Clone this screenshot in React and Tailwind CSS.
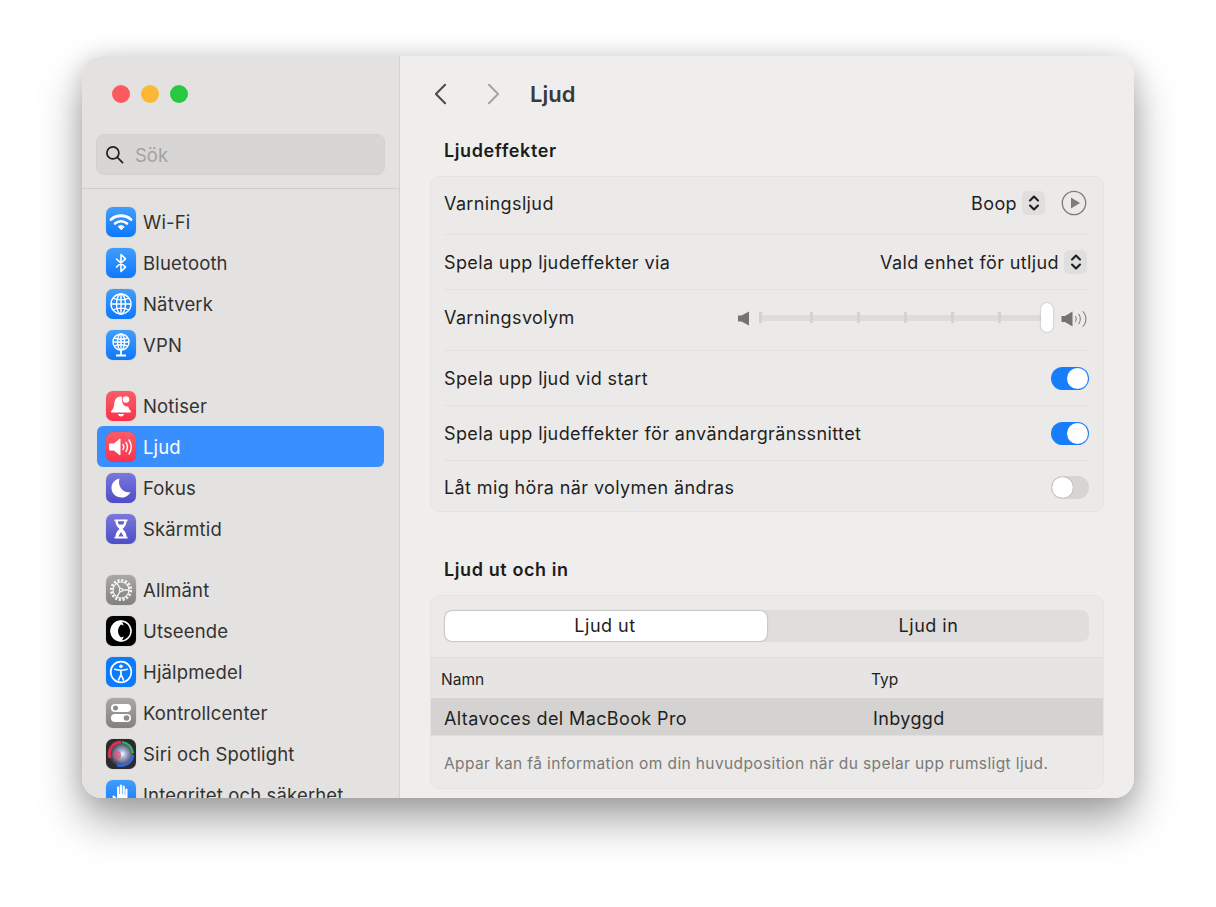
import React from "react";

const blue = "bg-linear-to-b from-[#3f9dfb] to-[#0a78fe]";
const gray = "bg-linear-to-b from-[#a9a8a7] to-[#828180]";
const indigo = "bg-linear-to-b from-[#7a78dc] to-[#4f4cc8]";
const red = "bg-linear-to-b from-[#fb5b68] to-[#f9304c]";

function Wifi() {
  return (
    <svg viewBox="0 0 30 30" className="w-full h-full" fill="none" stroke="#fff" strokeLinecap="round">
      <path d="M5 12.5C10.5 7.5 19.5 7.5 25 12.5" strokeWidth="2.8" />
      <path d="M9 16.5C12.5 13.5 17.5 13.5 21 16.5" strokeWidth="2.6" />
      <path d="M15 22.5l-2.8-3c1.6-1.2 4-1.2 5.6 0z" fill="#fff" stroke="#fff" strokeWidth="1" strokeLinejoin="round" />
    </svg>
  );
}

function Bluetooth() {
  return (
    <svg viewBox="0 0 30 30" className="w-full h-full" fill="none" stroke="#fff" strokeWidth="1.6" strokeLinejoin="round" strokeLinecap="round">
      <path d="M10.500 11l9 8.200-4.500 4.300V6.500l4.500 4.300-9 8.200" />
    </svg>
  );
}

function Globe({ small }) {
  return (
    <svg viewBox="0 0 30 30" className="w-full h-full" fill="none" stroke="#fff" strokeWidth="1.4">
      {small ? (
        <g>
          <circle cx="15" cy="12" r="8" />
          <ellipse cx="15" cy="12" rx="3.5" ry="8" />
          <path d="M8.500 8c4 1.500 9 1.500 13 0M8.500 16c4-1.500 9-1.500 13 0M7 12h16M15 4v16" />
          <path d="M15 20v5M10 25.500h10" strokeWidth="1.800" />
        </g>
      ) : (
        <g>
          <circle cx="15" cy="15" r="10" />
          <ellipse cx="15" cy="15" rx="4.5" ry="10" />
          <path d="M7 9c4.500 2.500 11.500 2.500 16 0M7 21c4.500-2.500 11.500-2.500 16 0M5 15h20M15 5v20" />
        </g>
      )}
    </svg>
  );
}

function Bell() {
  return (
    <svg viewBox="0 0 30 30" className="w-full h-full" fill="#fff">
      <path d="M15 5.500c-4.500 0-6.500 3.500-6.800 7.500-.2 3-1 5-3 7-.5.6-.2 1.500.6 1.500h18.400c.8 0 1.100-.9.6-1.500-1.400-1.500-2.200-2.800-2.600-4.500-4 .5-7-3-6.200-9.800-.3-.1-.6-.2-1-.2z" />
      <path d="M12 23h6c-.3 1.600-1.500 2.500-3 2.500s-2.700-.9-3-2.500z" />
      <circle cx="20" cy="8.500" r="3.300" />
    </svg>
  );
}

function Speaker({ fill = "#fff" }) {
  return (
    <svg viewBox="0 0 30 30" className="w-full h-full" fill="none" stroke={fill} strokeLinecap="round">
      <path d="M4 12h4l6-5v16l-6-5H4z" fill={fill} strokeWidth="1" strokeLinejoin="round" />
      <path d="M17 12.500c1 1.500 1 3.500 0 5M20 10.500c1.800 2.800 1.800 6.200 0 9M23 8c2.800 4.300 2.800 9.700 0 14" strokeWidth="1.4" />
    </svg>
  );
}

function Moon() {
  return (
    <svg viewBox="0 0 30 30" className="w-full h-full" fill="#fff">
      <path d="M13.500 5.500C8.500 6.500 5.500 10.500 5.500 15c0 5.500 4.500 9.500 10 9.500 4 0 7.500-2 9-5.500-6.500 1.500-13.500-5-11-13.500z" />
    </svg>
  );
}

function Hourglass() {
  return (
    <svg viewBox="0 0 30 30" className="w-full h-full" fill="#fff">
      <path d="M8.500 5.500h13v1.800h-1c0 3.700-1.800 5.700-4 7.700 2.200 2 4 4 4 7.700h1v1.800h-13v-1.800h1c0-3.700 1.800-5.700 4-7.700-2.200-2-4-4-4-7.700h-1z" />
      <path d="M11.800 7.300h6.400c-.1 1.200-.4 2.200-1 3.200h-4.400c-.6-1-.9-2-1-3.200zM15 18l-2.800 4.500h5.600z" fill="#6361d2" />
    </svg>
  );
}

function Gear() {
  return (
    <svg viewBox="0 0 30 30" className="w-full h-full" fill="none" stroke="#f4f4f3">
      <circle cx="15" cy="15" r="9.700" strokeWidth="2.800" strokeDasharray="2.200 1.600" />
      <circle cx="15" cy="15" r="8" strokeWidth="1.200" />
      <circle cx="15" cy="15" r="1.600" strokeWidth="1.200" />
      <path d="M16.500 15h6.500M14.200 13.600l-3.500-5.800M14.200 16.400l-3.500 5.800" strokeWidth="1.300" />
    </svg>
  );
}

function Appearance() {
  return (
    <svg viewBox="0 0 30 30" className="w-full h-full">
      <circle cx="15" cy="15" r="10.500" fill="#fff" />
      <path d="M15 8.500c-2 2-3 4-3 6.500s1 4.500 3 6.500c4-1 6.500-3.500 6.500-6.500S19 9.500 15 8.500z" fill="#000" />
      <path d="M15 4.500a10.500 10.500 0 0 1 0 21c2.500-3 3.500-6.500 3.500-10.500S17.500 7.500 15 4.500z" fill="#000" />
      <circle cx="15" cy="15" r="10" fill="none" stroke="#fff" strokeWidth="1.500" />
    </svg>
  );
}

function Accessibility() {
  return (
    <svg viewBox="0 0 30 30" className="w-full h-full" fill="none" stroke="#fff">
      <circle cx="15" cy="15" r="10.300" strokeWidth="1.700" />
      <circle cx="15" cy="9.300" r="1.800" fill="#fff" stroke="none" />
      <path d="M8.800 12.300c4 1.200 8.400 1.200 12.400 0M15 13.500v4M15 17.500l-2.500 5.500M15 17.500l2.500 5.500" strokeWidth="1.700" strokeLinecap="round" />
    </svg>
  );
}

function Controls() {
  return (
    <svg viewBox="0 0 30 30" className="w-full h-full">
      <rect x="5" y="6" width="20" height="8" rx="4" fill="#fff" />
      <circle cx="9.500" cy="10" r="2.500" fill="#8e8d8c" />
      <rect x="5" y="16" width="20" height="8" rx="4" fill="#fff" />
      <circle cx="20.500" cy="20" r="2.800" fill="#8e8d8c" />
    </svg>
  );
}

function Siri() {
  return (
    <svg viewBox="0 0 30 30" className="w-full h-full">
      <defs>
        <radialGradient id="siri-core" cx="0.55" cy="0.5" r="0.5">
          <stop offset="0" stopColor="#fff" />
          <stop offset="0.3" stopColor="#aab6d8" />
          <stop offset="1" stopColor="#3a3a48" />
        </radialGradient>
      </defs>
      <circle cx="15" cy="15" r="12" fill="url(#siri-core)" />
      <path d="M15 3a12 12 0 0 0-11 16" fill="none" stroke="#f0304f" strokeWidth="3" opacity="0.9" />
      <path d="M16 3a12 12 0 0 1 11 11" fill="none" stroke="#2fc46b" strokeWidth="2" opacity="0.9" />
      <path d="M27 16a12 12 0 0 1-16 10" fill="none" stroke="#2f6cf0" strokeWidth="2.500" opacity="0.9" />
      <circle cx="11" cy="16" r="4" fill="#e0507a" opacity="0.7" />
    </svg>
  );
}

function Hand() {
  return (
    <svg viewBox="0 0 30 30" className="w-full h-full" fill="#fff">
      <path d="M11 7.500a1.100 1.100 0 0 1 2.200 0V14h.6V5.700a1.100 1.100 0 0 1 2.200 0V14h.6V6.700a1.100 1.100 0 0 1 2.200 0V15h.5V9.500a1.100 1.100 0 0 1 2.200 0V19c0 4-2.500 7-6.500 7-3 0-4.500-1.500-5.500-3.500l-3-5.500c-.6-1.200 1-2.200 1.900-1.200L11 18.500z" />
    </svg>
  );
}

function Chevrons() {
  return (
    <svg viewBox="0 0 12 18" className="w-[12px] h-[18px]" fill="none" stroke="#1d1d1f" strokeWidth="2.100" strokeLinecap="round" strokeLinejoin="round">
      <path d="M2 6.500L6 2.500l4 4M2 11.500L6 15.500l4-4" />
    </svg>
  );
}

function Stepper() {
  return (
    <div className="w-[23px] h-[24px] rounded-[5px] bg-[#e0dfdd] flex items-center justify-center">
      <Chevrons />
    </div>
  );
}

function Toggle({ on }) {
  return on ? (
    <div className="w-[38px] h-[23px] rounded-full bg-[#167efb] flex items-center justify-end pr-[1px]">
      <div className="w-[21px] h-[21px] rounded-full bg-white" />
    </div>
  ) : (
    <div className="w-[38px] h-[23px] rounded-full bg-[#d6d5d3] flex items-center pl-[1px]">
      <div className="w-[21px] h-[21px] rounded-full bg-white shadow-[0_0_1px_rgba(0,0,0,0.5)]" />
    </div>
  );
}

function Tick({ className }) {
  return <div className={"w-[3px] h-[11px] shrink-0 bg-[#d3d2d0] " + className} />;
}

function Slider() {
  return (
    <div className="flex items-center mr-[2px]">
      <svg viewBox="0 0 13 15" className="w-[13px] h-[17px] mr-[9px] mt-[2px]" fill="#737372">
        <path d="M1 4.500h3.500L12 .5v14l-7.500-4H1z" />
      </svg>
      <div className="flex items-center h-[6px] w-[282px] bg-[#dddcda]">
        <Tick className="mr-[48px]" />
        <Tick className="mr-[44px]" />
        <Tick className="mr-[44px]" />
        <Tick className="mr-[44px]" />
        <Tick className="mr-[44px]" />
        <Tick />
      </div>
      <div className="w-[12px] h-[29px] rounded-full bg-white shadow-[0_0_2px_rgba(0,0,0,0.3)]" />
      <svg viewBox="0 0 26 18" className="w-[26px] h-[18px] ml-[8px] mt-[2px]" fill="none" stroke="#737372" strokeLinecap="round">
        <path d="M0.500 6h3.500L11.500 1.500v15L4 12H0.500z" fill="#737372" stroke="none" />
        <path d="M14.500 6.500c1 1.500 1 3.500 0 5M17.800 4.200c2 3 2 6.600 0 9.600M22 1.500c4 4.500 4 10.500 0 15" strokeWidth="1" />
      </svg>
    </div>
  );
}

function Row({ children, className = "" }) {
  return (
    <div className={"flex items-center justify-between border-[#e2e1df] text-[18px] tracking-[0.38px] text-[#1f1f1f] " + className}>
      {children}
    </div>
  );
}

function NavItem({ label, bg, icon, active }) {
  return (
    <div className={"flex items-center h-[41px] shrink-0 rounded-[6px] pl-[9px] pt-[1px] " + (active ? "bg-[#3a8ffe] text-white" : "text-[#333333]")}>
      <div className={"w-[30px] h-[30px] shrink-0 rounded-[7px] overflow-hidden shadow-[0_0_1px_rgba(0,0,0,0.35)] " + bg}>{icon}</div>
      <span className="ml-[7px] pt-[2px] text-[18.500px] tracking-[0.15px] whitespace-nowrap">{label}</span>
    </div>
  );
}

export default function App() {
  return (
    <div className="min-h-[907px] bg-white pl-[82px] pt-[56px] font-['Inter',sans-serif] antialiased">
      <div className="flex w-[1052px] h-[742px] rounded-[20px] overflow-hidden shadow-[0_22px_44px_rgba(0,0,0,0.36),0_0_22px_rgba(0,0,0,0.12)]">
        <aside className="w-[318px] shrink-0 bg-[#e3e2e0] border-r border-[#d2d1cf] flex flex-col">
          <div className="flex shrink-0 gap-[11px] pl-[30px] pt-[29px]">
            <div className="w-[18px] h-[18px] rounded-full bg-[#fd5a60]" />
            <div className="w-[18px] h-[18px] rounded-full bg-[#fdb833]" />
            <div className="w-[18px] h-[18px] rounded-full bg-[#2ac840]" />
          </div>
          <div className="mx-[14px] mt-[31px] h-[41px] shrink-0 rounded-[8px] bg-[#d7d6d4] border border-[#d2d1cf] flex items-center pl-[8px]">
            <svg viewBox="0 0 20 20" className="w-[19px] h-[19px]" fill="none" stroke="#1f1f1f" strokeWidth="1.800" strokeLinecap="round">
              <circle cx="8.300" cy="8.300" r="6.300" />
              <path d="M13 13l5.500 5.500" />
            </svg>
            <span className="ml-[11px] pt-[2px] text-[18.500px] text-[#a3a2a0]">Sök</span>
          </div>
          <div className="mt-[13px] shrink-0 border-t border-[#cfcecc]" />
          <nav className="flex flex-col shrink-0 px-[15px] pt-[12px]">
            <NavItem label="Wi-Fi" bg={blue} icon={<Wifi />} />
            <NavItem label="Bluetooth" bg={blue} icon={<Bluetooth />} />
            <NavItem label="Nätverk" bg={blue} icon={<Globe />} />
            <NavItem label="VPN" bg={blue} icon={<Globe small />} />
            <div className="h-[20px] shrink-0" />
            <NavItem label="Notiser" bg={red} icon={<Bell />} />
            <NavItem label="Ljud" bg={red} icon={<Speaker />} active />
            <NavItem label="Fokus" bg={indigo} icon={<Moon />} />
            <NavItem label="Skärmtid" bg={indigo} icon={<Hourglass />} />
            <div className="h-[20px] shrink-0" />
            <NavItem label="Allmänt" bg={gray} icon={<Gear />} />
            <NavItem label="Utseende" bg="bg-black" icon={<Appearance />} />
            <NavItem label="Hjälpmedel" bg="bg-[#0a7bfd]" icon={<Accessibility />} />
            <NavItem label="Kontrollcenter" bg={gray} icon={<Controls />} />
            <NavItem label="Siri och Spotlight" bg="bg-[#2b2b2e]" icon={<Siri />} />
            <NavItem label="Integritet och säkerhet" bg={blue} icon={<Hand />} />
          </nav>
        </aside>

        <main className="flex-1 bg-[#efeeed] overflow-hidden">
          <div className="flex items-center h-[75px] pl-[34px]">
            <svg viewBox="0 0 14 24" className="w-[13px] h-[22px]" fill="none" stroke="#4a4a4a" strokeWidth="2.200" strokeLinecap="round" strokeLinejoin="round">
              <path d="M12 2L2 12l10 10" />
            </svg>
            <svg viewBox="0 0 14 24" className="w-[13px] h-[22px] ml-[40px]" fill="none" stroke="#a5a4a3" strokeWidth="2.200" strokeLinecap="round" strokeLinejoin="round">
              <path d="M2 2l10 10-10 10" />
            </svg>
            <h1 className="ml-[30px] text-[22px] font-semibold text-[#3a3a3a] leading-none">Ljud</h1>
          </div>

          <h2 className="ml-[44px] mt-[8px] h-[24px] text-[18px] tracking-[0.6px] leading-[24px] font-semibold text-[#1c1c1c]">Ljudeffekter</h2>

          <section className="mx-[30px] mt-[13px] h-[336px] rounded-[10px] bg-[#ebeae8] border border-[#e4e3e1] pl-[13px] pr-[14px]">
            <Row className="h-[58px] pb-[5px] border-b">
              <span>Varningsljud</span>
              <div className="flex items-center mr-[2px]">
                <span>Boop</span>
                <div className="ml-[5px]"><Stepper /></div>
                <svg viewBox="0 0 26 26" className="w-[26px] h-[26px] ml-[16px]" fill="none">
                  <circle cx="13" cy="13" r="11.700" stroke="#7d7c7b" strokeWidth="1.300" />
                  <path d="M10 7.500l9 5.500-9 5.500z" fill="#7d7c7b" />
                </svg>
              </div>
            </Row>
            <Row className="h-[55px] border-b">
              <span>Spela upp ljudeffekter via</span>
              <div className="flex items-center mr-[2px]">
                <span>Vald enhet för utljud</span>
                <div className="ml-[5px]"><Stepper /></div>
              </div>
            </Row>
            <Row className="h-[61px] pb-[5px] border-b">
              <span>Varningsvolym</span>
              <Slider />
            </Row>
            <Row className="h-[55px] border-b">
              <span>Spela upp ljud vid start</span>
              <Toggle on />
            </Row>
            <Row className="h-[55px] border-b">
              <span>Spela upp ljudeffekter för användargränssnittet</span>
              <Toggle on />
            </Row>
            <Row className="h-[50px] pt-[2px]">
              <span>Låt mig höra när volymen ändras</span>
              <Toggle />
            </Row>
          </section>

          <h2 className="ml-[44px] mt-[46px] h-[24px] text-[18px] tracking-[0.6px] leading-[24px] font-semibold text-[#1c1c1c]">Ljud ut och in</h2>

          <section className="mx-[30px] mt-[13px] h-[194px] rounded-[10px] bg-[#ebeae8] border border-[#e4e3e1] overflow-hidden">
            <div className="pl-[13px] pr-[14px] pt-[14px] pb-[15px]">
              <div className="flex h-[32px] rounded-[8px] bg-[#dfdedc] p-[1px] text-[18px] tracking-[0.5px] text-[#1f1f1f]">
                <div className="w-[322px] rounded-[7px] bg-white shadow-[0_0_2px_rgba(0,0,0,0.35)] flex items-center justify-center pb-[2px] pr-[2px]">Ljud ut</div>
                <div className="flex-1 flex items-center justify-center pb-[2px] pl-[2px]">Ljud in</div>
              </div>
            </div>
            <div className="flex items-center h-[41px] pt-[3px] bg-[#e6e5e3] border-t border-[#dfdedc] text-[15.500px] text-[#1f1f1f]">
              <span className="ml-[10px] w-[430px]">Namn</span>
              <span>Typ</span>
            </div>
            <div className="flex items-center h-[38px] pt-[3px] bg-[#d4d3d1] border-b border-[#e0dfdd] text-[18px] tracking-[0.38px] text-[#1f1f1f]">
              <span className="ml-[13px] w-[429px]">Altavoces del MacBook Pro</span>
              <span>Inbyggd</span>
            </div>
            <p className="ml-[13px] mt-[18px] text-[15.500px] tracking-[0.385px] leading-[20px] text-[#7a7977] whitespace-nowrap">
              Appar kan få information om din huvudposition när du spelar upp rumsligt ljud.
            </p>
          </section>
        </main>
      </div>
    </div>
  );
}
